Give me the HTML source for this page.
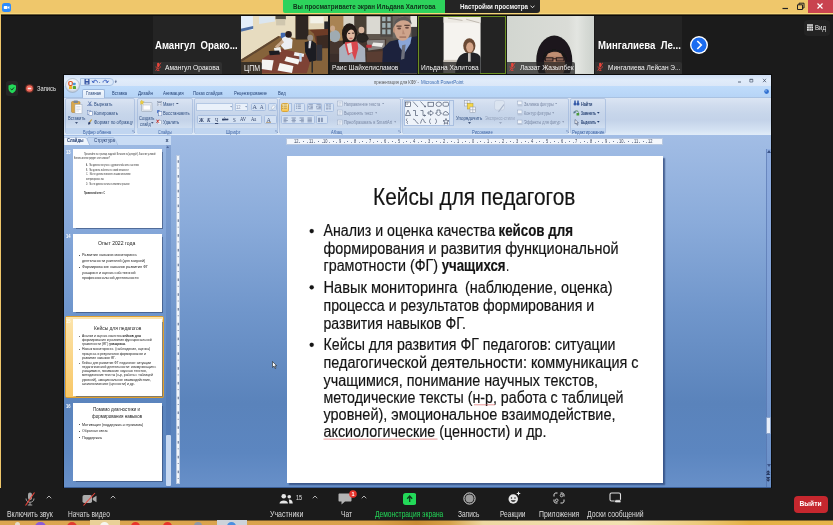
<!DOCTYPE html>
<html lang="ru">
<head>
<meta charset="utf-8">
<title>Zoom</title>
<style>
*{box-sizing:border-box;margin:0;padding:0}
html,body{width:833px;height:525px;overflow:hidden;background:#1b1b1b}
body{font-family:"Liberation Sans",sans-serif;color:#fff;position:relative}
.abs{position:absolute}
#root{will-change:transform;position:absolute;left:0;top:0;width:833px;height:525px;background:#1b1b1b;overflow:hidden}
.t{position:absolute;white-space:nowrap;line-height:1;transform-origin:0 0;font-family:"Liberation Sans",sans-serif}
</style>
</head>
<body>
<div id="root">
<!-- SECTION:TOP -->
<div class="abs" style="left:0px;top:0px;width:833px;height:14px;background:#efc76b;"></div>
<div class="abs" style="left:0px;top:13px;width:833px;height:1px;background:#f6d67a;"></div>
<div class="abs" style="left:0px;top:14px;width:833px;height:1px;background:#6b5a32;"></div>
<div class="abs" style="left:0px;top:15px;width:833px;height:1px;background:#0b0b0b;"></div>
<div class="abs" style="left:0px;top:14px;width:1px;height:506px;background:#efc76b;"></div>
<svg class="abs" style="left:2px;top:2.5px" width="9" height="9" viewBox="0 0 18 18"><rect x="0" y="0" width="18" height="18" rx="5" fill="#2d8cff"/><rect x="3.5" y="6" width="7.5" height="6" rx="1.5" fill="#fff"/><path d="M11.8 8.2 L14.8 6.2 V11.8 L11.8 9.8Z" fill="#fff"/></svg>
<div class="abs" style="left:283px;top:0px;width:162px;height:12.6px;background:#2dd35c;border-radius:0 0 0 2px"></div>
<div class="t" style="left:293px;top:2.79px;font-size:7.8px;color:#10301a;transform:scaleX(0.806);font-weight:bold">Вы просматриваете экран Ильдана Халитова</div>
<div class="abs" style="left:445px;top:0px;width:94.5px;height:13px;background:#242424;border-radius:0 0 3px 0"></div>
<div class="t" style="left:460px;top:2.98px;font-size:7.6px;color:#f4f4f4;transform:scaleX(0.821);font-weight:bold">Настройки просмотра</div>
<svg class="abs" style="left:530px;top:5.2px" width="5" height="3.6" viewBox="0 0 10 7"><path d="M1 1.2 L5 5.4 L9 1.2" stroke="#f2f2f2" stroke-width="1.8" fill="none"/></svg>
<div class="abs" style="left:808px;top:0px;width:25px;height:12.6px;background:#c9434f;"></div>
<svg class="abs" style="left:778px;top:0" width="55" height="14" viewBox="0 0 55 14"><path d="M4.5 8.5 H10" stroke="#222" stroke-width="1.2"/><path d="M19.5 4.8 H24.5 V9.5 H19.5Z M21 4.8 V3.2 H26 V8 H24.5" stroke="#222" stroke-width="1" fill="none"/><path d="M39.5 3.5 L44.5 8.5 M44.5 3.5 L39.5 8.5" stroke="#fff" stroke-width="1.2"/></svg>
<div class="abs" style="left:803.5px;top:20px;width:26px;height:16px;background:#232323;border-radius:4px"></div>
<svg class="abs" style="left:806.8px;top:24px" width="6.4" height="7" viewBox="0 0 14 14"><rect x="0" y="0" width="14" height="3.2" fill="#e8e8e8"/><rect x="0" y="4.6" width="14" height="9.4" fill="#e8e8e8"/><path d="M4.7 4.6V14M9.3 4.6V14M0 9.3H14" stroke="#222" stroke-width="1"/></svg>
<div class="t" style="left:815px;top:24.18px;font-size:7.6px;color:#eee;transform:scaleX(0.800);">Вид</div>
<div class="abs" style="left:5.5px;top:81px;width:12.5px;height:15px;background:#262626;border-radius:2.5px"></div>
<svg class="abs" style="left:7.5px;top:84px" width="8.5" height="9.5" viewBox="0 0 17 19"><path d="M8.5 0.5 L16 3 V9 C16 14 12.5 17 8.5 18.5 C4.5 17 1 14 1 9 V3Z" fill="#23d959"/><path d="M5 9.5 L7.7 12 L12 7" stroke="#14301c" stroke-width="2" fill="none"/></svg>
<svg class="abs" style="left:24px;top:83px" width="11" height="11" viewBox="0 0 22 22"><circle cx="11" cy="11" r="9" fill="#d0462e" opacity=".35"/><circle cx="11" cy="11" r="6.6" fill="#f0685a"/><rect x="7.5" y="9.5" width="7" height="3" rx="1" fill="#fbe9e6"/></svg>
<div class="t" style="left:37px;top:85.07px;font-size:7.4px;color:#e6e6e6;transform:scaleX(0.782);">Запись</div>
<!-- SECTION:GALLERY -->
<div class="abs" style="left:153px;top:16.3px;width:87.5px;height:57.3px;background:#242424;"></div>
<div class="t" style="left:155px;top:40.05px;font-size:11px;color:#fff;transform:scaleX(0.870);font-weight:bold">Амангул&nbsp; Орако...</div>
<div class="abs" style="left:153px;top:61.6px;width:69px;height:12px;background:#303030;border-radius:0 2px 0 0"></div>
<svg class="abs" style="left:155.2px;top:62.4px" width="6.4" height="9.6" viewBox="0 0 14 20"><rect x="4.6" y="1" width="5" height="10" rx="2.5" fill="#e8443a"/><path d="M2 9 C2 15.5 12 15.5 12 9 M7 14 V18 M4.2 18 H9.8" stroke="#e8443a" stroke-width="1.6" fill="none"/><path d="M13 1 L1.5 18.5" stroke="#e8443a" stroke-width="1.8"/></svg>
<div class="t" style="left:165.4px;top:64.29px;font-size:7.8px;color:#f2f2f2;transform:scaleX(0.860);">Амангул Оракова</div>
<div class="abs" style="left:240.7px;top:16.3px;width:87.5px;height:57.3px;background:#86643a;"></div>
<svg class="abs" style="left:240.7px;top:16.3px" width="87.5" height="57.3" viewBox="0 0 87.5 57.3"><defs><filter id="bl240" x="-5%" y="-5%" width="110%" height="110%"><feGaussianBlur stdDeviation="4.92"/></filter><clipPath id="cp240"><rect x="0" y="0" width="87.5" height="57.3"/></clipPath></defs><g clip-path="url(#cp240)"><g transform="translate(-2.7,-4.3) scale(0.12195)" filter="url(#bl240)">
<rect x="0" y="0" width="780" height="540" fill="#86643a"/>
<polygon points="20,30 470,30 470,215 330,200 20,395" fill="#e7dcc0"/>
<polygon points="20,395 330,200 340,212 20,415" fill="#5e4630"/>
<rect x="20" y="30" width="100" height="120" fill="#e4eefa"/><polygon points="20,140 122,118 122,140 20,165" fill="#4f6fa5"/>
<polygon points="170,40 300,40 300,80 170,100" fill="#dbe6f0"/>
<rect x="305" y="30" width="85" height="32" fill="#55524a"/><rect x="310" y="62" width="75" height="50" fill="#cfc6ae"/>
<rect x="470" y="30" width="105" height="198" fill="#2e2620"/>
<rect x="575" y="30" width="175" height="115" fill="#e3d8bc"/><rect x="590" y="40" width="110" height="55" fill="#f2f1e8"/>
<rect x="705" y="80" width="45" height="65" fill="#26262a"/>
<polygon points="585,150 750,140 750,270 640,270 620,180" fill="#6d3a28"/>
<polygon points="640,200 750,190 750,300 650,300" fill="#3a2a24"/>
<polygon points="190,392 330,298 605,362 560,510 190,510" fill="#7e4234"/>
<polygon points="20,420 190,392 190,510 20,510" fill="#7d5f3a"/>
<rect x="348" y="172" width="40" height="45" rx="8" fill="#3f68b0"/>
<polygon points="360,215 400,195 445,230 440,300 380,312 350,280" fill="#eceef2"/>
<polygon points="300,285 360,230 375,250 320,300" fill="#c9a98c"/>
<ellipse cx="412" cy="186" rx="27" ry="27" fill="#2a1f1a"/>
<rect x="640" y="272" width="48" height="130" rx="8" fill="#33333a"/>
<polygon points="545,250 600,235 640,262 640,400 585,412 548,330" fill="#1b1b20"/>
<ellipse cx="590" cy="215" rx="24" ry="25" fill="#9a9088"/>
<polygon points="578,240 600,240 592,300 575,300" fill="#d8d8dc"/>
<rect x="600" y="400" width="12" height="100" fill="#2a2a2e"/>
<polygon points="195,392 290,398 275,482 185,470" fill="#f4f4f2"/>
<polygon points="395,368 505,392 490,432 378,405" fill="#f6f6f4"/>
<polygon points="340,420 452,445 440,502 322,482" fill="#f6f6f4"/>
<polygon points="462,330 540,345 535,372 455,360" fill="#f1f1ef"/>
<polygon points="292,298 345,290 352,330 300,338" fill="#efefed"/>
<polygon points="250,322 335,318 342,350 258,358" fill="#1e1e22"/>
<rect x="500" y="340" width="20" height="70" rx="6" fill="#c3d8ee"/>
</g></g></svg>
<div class="abs" style="left:240.7px;top:61.6px;width:21.30000000000001px;height:12px;background:rgba(34,34,34,.74);border-radius:0 2px 0 0"></div>
<div class="t" style="left:243.9px;top:64.02px;font-size:8.4px;color:#f2f2f2;transform:scaleX(0.836);">ЦПМ</div>
<div class="abs" style="left:329.7px;top:16.3px;width:87.2px;height:57.3px;background:#5e564e;"></div>
<svg class="abs" style="left:329.7px;top:16.3px" width="87.2" height="57.3" viewBox="0 0 87.2 57.3"><defs><filter id="bl329" x="-5%" y="-5%" width="110%" height="110%"><feGaussianBlur stdDeviation="4.92"/></filter><clipPath id="cp329"><rect x="0" y="0" width="87.2" height="57.3"/></clipPath></defs><g clip-path="url(#cp329)"><g transform="translate(-3.7,-4.3) scale(0.12195)" filter="url(#bl329)">
<rect x="0" y="0" width="780" height="540" fill="#5e564e"/>
<rect x="20" y="30" width="125" height="210" fill="#a98352"/>
<rect x="140" y="30" width="92" height="95" fill="#d6d2c6"/>
<rect x="230" y="30" width="100" height="165" fill="#4a3f36"/>
<rect x="330" y="38" width="115" height="145" fill="#dad9d2"/>
<rect x="445" y="30" width="100" height="175" fill="#4e4944"/>
<g fill="#9fb0b4"><rect x="458" y="42" width="28" height="36"/><rect x="500" y="42" width="28" height="36"/><rect x="458" y="92" width="28" height="40"/><rect x="500" y="92" width="28" height="40"/><rect x="458" y="145" width="28" height="40"/><rect x="500" y="145" width="28" height="40"/></g>
<rect x="545" y="30" width="150" height="190" fill="#6b655e"/>
<rect x="690" y="30" width="65" height="95" fill="#e6e5dd"/>
<rect x="700" y="125" width="55" height="90" fill="#3c3a3a"/>
<polygon points="30,240 490,225 490,345 30,360" fill="#45362f"/>
<polygon points="330,235 480,230 480,300 345,318" fill="#8a8684"/>
<polygon points="385,252 468,258 455,290 372,280" fill="#ecebe8"/>
<rect x="328" y="272" width="44" height="24" rx="5" fill="#c2313a"/>
<rect x="30" y="345" width="460" height="170" fill="#3b2f2a"/>
<polygon points="330,330 480,322 480,420 330,420" fill="#5a3c30"/>
<ellipse cx="70" cy="200" rx="45" ry="50" fill="#9fabb2"/><ellipse cx="52" cy="138" rx="20" ry="24" fill="#caa88c"/>
<ellipse cx="295" cy="215" rx="48" ry="40" fill="#26221f"/><ellipse cx="288" cy="150" rx="24" ry="27" fill="#d8b49c"/>
<polygon points="255,200 300,185 350,215 330,245 260,245" fill="#2a2623"/>
<ellipse cx="190" cy="180" rx="62" ry="85" fill="#211a18"/>
<polygon points="105,300 150,258 260,252 318,300 322,415 105,415" fill="#a9b1be"/>
<polygon points="150,250 255,245 262,300 235,400 210,335 178,360 160,300" fill="#d9474d"/>
<polygon points="168,262 205,255 215,330 185,340" fill="#e8dcdc"/>
<ellipse cx="200" cy="190" rx="34" ry="48" fill="#e0b8a0"/>
<path d="M140 185 C140 90 250 90 255 185 C235 130 170 130 160 215Z" fill="#211a18"/>
<polygon points="465,300 520,245 600,225 755,200 755,515 455,515" fill="#1a233c"/>
<polygon points="588,235 700,205 690,260 640,340 600,290" fill="#8aa6d8"/>
<polygon points="622,275 650,268 640,385 612,395" fill="#6d707c"/>
<ellipse cx="625" cy="140" rx="70" ry="98" fill="#cfa48c"/>
<path d="M556 120 C550 20 700 15 700 105 C660 55 590 60 556 120Z" fill="#5a5858"/>
<path d="M575 118 h42 M640 112 h44" stroke="#5a4238" stroke-width="10"/>
<ellipse cx="598" cy="138" rx="16" ry="8" fill="#6a4a40"/><ellipse cx="662" cy="132" rx="16" ry="8" fill="#6a4a40"/>
<path d="M628 140 L622 185 L645 185" fill="#b88a74"/>
<path d="M600 208 h55" stroke="#8a5a4c" stroke-width="8"/>
<ellipse cx="556" cy="150" rx="9" ry="24" fill="#c0947c"/>
<path d="M178 178 h18 M210 176 h18" stroke="#3a2620" stroke-width="8"/>
<path d="M190 218 h24" stroke="#b04a4a" stroke-width="7"/>
<path d="M140 180 C130 240 135 270 150 262 L160 215Z" fill="#211a18"/>
</g></g></svg>
<div class="abs" style="left:329.7px;top:61.6px;width:70.10000000000002px;height:12px;background:rgba(34,34,34,.74);border-radius:0 2px 0 0"></div>
<div class="t" style="left:331.9px;top:64.29px;font-size:7.8px;color:#f2f2f2;transform:scaleX(0.839);">Раис Шайхелисламов</div>
<div class="abs" style="left:417.5px;top:16.3px;width:88.4px;height:57.3px;background:#232323;"></div>
<svg class="abs" style="left:417.5px;top:16.3px" width="88.4" height="57.3" viewBox="0 0 88.4 57.3"><defs><filter id="bl417" x="-5%" y="-5%" width="110%" height="110%"><feGaussianBlur stdDeviation="3.28"/></filter><clipPath id="cp417"><rect x="0" y="0" width="88.4" height="57.3"/></clipPath></defs><g clip-path="url(#cp417)"><g transform="translate(-5.5,-4.3) scale(0.12195)" filter="url(#bl417)">
<rect x="255" y="30" width="303" height="480" fill="#f5f3ef"/>
<rect x="255" y="30" width="303" height="60" fill="#ece9e3"/>
<path d="M290 52 L410 72 M440 62 L550 92" stroke="#b9b2a8" stroke-width="7"/>
<rect x="255" y="395" width="120" height="115" fill="#cdc6bc"/>
<path d="M350 510 C350 380 390 335 470 332 C520 332 558 350 558 380 V510Z" fill="#202428"/>
<ellipse cx="466" cy="280" rx="50" ry="62" fill="#6b4a34"/>
<ellipse cx="470" cy="292" rx="30" ry="42" fill="#d6a68a"/>
<rect x="455" y="340" width="22" height="70" fill="#c9c4c0"/>
</g></g></svg>
<div class="abs" style="left:417.5px;top:16.3px;width:88.4px;height:57.3px;background:transparent;border:1px solid #6a8f22"></div>
<div class="abs" style="left:418.5px;top:61.6px;width:61.5px;height:12px;background:rgba(34,34,34,.74);border-radius:0 2px 0 0"></div>
<div class="t" style="left:420.8px;top:64.29px;font-size:7.8px;color:#f2f2f2;transform:scaleX(0.841);">Ильдана Халитова</div>
<div class="abs" style="left:507px;top:16.3px;width:86.7px;height:57.3px;background:#d6d9d4;"></div>
<svg class="abs" style="left:507px;top:16.3px" width="86.7" height="57.3" viewBox="0 0 86.7 57.3"><defs><filter id="bl507" x="-5%" y="-5%" width="110%" height="110%"><feGaussianBlur stdDeviation="4.92"/></filter><clipPath id="cp507"><rect x="0" y="0" width="86.7" height="57.3"/></clipPath></defs><g clip-path="url(#cp507)"><g transform="translate(-7,-4.3) scale(0.12195)" filter="url(#bl507)">
<defs><linearGradient id="w4" x1="0" x2="1" y1="0" y2="0"><stop offset="0" stop-color="#d2d6d0"/><stop offset=".7" stop-color="#dadcd7"/><stop offset=".8" stop-color="#e3e5e1"/><stop offset=".9" stop-color="#d6dad5"/><stop offset="1" stop-color="#ccd1cc"/></linearGradient></defs>
<rect x="40" y="20" width="740" height="500" fill="url(#w4)"/>
<ellipse cx="445" cy="400" rx="148" ry="205" fill="#1a181a"/>
<ellipse cx="447" cy="440" rx="86" ry="118" fill="#b5846a"/>
<path d="M352 395 C352 285 545 285 545 395 C520 330 470 322 420 332 C390 338 365 360 352 395Z" fill="#1a181a"/>
<path d="M372 378 h62 v26 h-62z M462 378 h62 v26 h-62z M434 386 h28" fill="#8a6454" stroke="#2a1c1c" stroke-width="9"/>
<ellipse cx="447" cy="350" rx="60" ry="16" fill="#c49478" opacity=".7"/>
</g></g></svg>
<div class="abs" style="left:507px;top:61.6px;width:67.60000000000002px;height:12px;background:rgba(34,34,34,.74);border-radius:0 2px 0 0"></div>
<svg class="abs" style="left:509.4px;top:62.4px" width="6.4" height="9.6" viewBox="0 0 14 20"><rect x="4.6" y="1" width="5" height="10" rx="2.5" fill="#e8443a"/><path d="M2 9 C2 15.5 12 15.5 12 9 M7 14 V18 M4.2 18 H9.8" stroke="#e8443a" stroke-width="1.6" fill="none"/><path d="M13 1 L1.5 18.5" stroke="#e8443a" stroke-width="1.8"/></svg>
<div class="t" style="left:519.5px;top:64.29px;font-size:7.8px;color:#f2f2f2;transform:scaleX(0.842);">Лаззат Жазылбек</div>
<div class="abs" style="left:595px;top:16.3px;width:87px;height:57.3px;background:#242424;"></div>
<div class="t" style="left:597.5px;top:40.05px;font-size:11px;color:#fff;transform:scaleX(0.872);font-weight:bold">Мингалиева&nbsp; Ле...</div>
<div class="abs" style="left:595px;top:61.6px;width:87px;height:12px;background:#303030;border-radius:0 2px 0 0"></div>
<svg class="abs" style="left:597px;top:62.4px" width="6.4" height="9.6" viewBox="0 0 14 20"><rect x="4.6" y="1" width="5" height="10" rx="2.5" fill="#e8443a"/><path d="M2 9 C2 15.5 12 15.5 12 9 M7 14 V18 M4.2 18 H9.8" stroke="#e8443a" stroke-width="1.6" fill="none"/><path d="M13 1 L1.5 18.5" stroke="#e8443a" stroke-width="1.8"/></svg>
<div class="t" style="left:607.8px;top:64.29px;font-size:7.8px;color:#f2f2f2;transform:scaleX(0.837);">Мингалиева Лейсан Э...</div>
<svg class="abs" style="left:688.5px;top:34.8px" width="20" height="20" viewBox="0 0 20 20"><circle cx="10" cy="10" r="9" fill="#fff"/><circle cx="10" cy="10" r="7.6" fill="#1b6cf0"/><path d="M8.3 6 L12.3 10 L8.3 14" stroke="#fff" stroke-width="1.6" fill="none"/></svg>
<!-- SECTION:PPT -->
<div class="abs" style="left:62.6px;top:74.2px;width:709.6px;height:414.6px;background:#0c0c0c;"></div>
<div class="abs" style="left:63.7px;top:75.4px;width:707.5px;height:412.6px;background:#7f9fd0;"></div>
<div class="abs" style="left:63.7px;top:75.4px;width:707.5px;height:10.4px;background:linear-gradient(#cfdff5 0%,#e1ecfa 45%,#dbe7f8 100%);"></div>
<div class="abs" style="left:63.7px;top:85.7px;width:707.5px;height:11px;background:linear-gradient(#c0dcfb,#b6d4f6);"></div>
<div class="abs" style="left:63.7px;top:96.6px;width:707.5px;height:1px;background:#a9c2e2;"></div>
<div class="abs" style="left:63.7px;top:97.5px;width:707.5px;height:37px;background:linear-gradient(#dbe5f3 0%,#d0dcee 20%,#c6d5ea 45%,#c4d3e9 60%,#d3e1f2 85%,#e1ecf8 100%);"></div>
<svg class="abs" style="left:64.6px;top:77.6px" width="15" height="15" viewBox="0 0 30 30"><defs><radialGradient id="ob" cx=".5" cy=".35" r=".7"><stop offset="0" stop-color="#ffffff"/><stop offset=".6" stop-color="#e6ebf2"/><stop offset="1" stop-color="#aab7c9"/></radialGradient></defs><circle cx="15" cy="15" r="14" fill="url(#ob)" stroke="#8e9db3" stroke-width="1"/><rect x="7.6" y="7" width="7" height="8" rx="2.4" fill="none" stroke="#e0521e" stroke-width="2.4"/><rect x="15.6" y="9.4" width="5.6" height="5" rx="1" fill="#4a9ad8"/><rect x="8" y="16.2" width="6.4" height="6" rx="1.4" fill="#f0b428"/><rect x="15.6" y="15.8" width="6.4" height="6.4" rx="1.4" fill="#5aa832"/></svg>
<div class="abs" style="left:80px;top:77.6px;width:34px;height:8px;background:#dce9f9;border:0.6px solid #a9c2e4;border-radius:0 4px 4px 0"></div>
<svg class="abs" style="left:82px;top:78px" width="38" height="8" viewBox="0 0 76 16"><rect x="5" y="2" width="10" height="11" rx="1" fill="#2f4fa0"/><rect x="7.5" y="2.5" width="5" height="3.6" fill="#dfe8f6"/><rect x="7.5" y="8.5" width="5" height="4.5" fill="#9fb4dc"/><path d="M22 9 C22 3 31 3 31 9 M22 9 L20 5.5 M22 9 L25.5 7.5" stroke="#3a5fc0" stroke-width="2" fill="none"/><path d="M34 8 l2.5 0 l-1.25 2z" fill="#4a5f86"/><path d="M51 9 C51 3 42 3 42 9 M51 9 L53 5.5 M51 9 L47.5 7.5" stroke="#3a5fc0" stroke-width="2" fill="none"/><path d="M66 7 l3 0 l-1.5 2.4z M66 4.8 h3" stroke="#3b4f78" stroke-width=".8" fill="#3b4f78"/></svg>
<div class="t" style="left:373.5px;top:78.55px;font-size:6.1px;color:#555;transform:scaleX(0.694);">презентация для КФУ -</div>
<div class="t" style="left:421px;top:78.55px;font-size:6.1px;color:#3a6ab0;transform:scaleX(0.737);">Microsoft PowerPoint</div>
<svg class="abs" style="left:733px;top:76px" width="36" height="10" viewBox="0 0 36 10"><path d="M5 6 H8" stroke="#39465e" stroke-width=".8"/><path d="M16.8 3.2 H19.8 V6 H16.8Z M16.8 3.6 H19.8" stroke="#39465e" stroke-width=".6" fill="none"/><path d="M30 2.8 L33 6.2 M33 2.8 L30 6.2" stroke="#39465e" stroke-width=".7"/></svg>
<svg class="abs" style="left:764.1px;top:89.2px" width="5.2" height="5.2" viewBox="0 0 12 12"><circle cx="6" cy="6" r="5.4" fill="#2f6fd0"/><circle cx="4.6" cy="4.2" r="2" fill="#9cc2f4" opacity=".8"/></svg>
<div class="abs" style="left:82.4px;top:88.6px;width:22.6px;height:9.2px;background:linear-gradient(#f3f8fe,#dfeaf8);border:0.6px solid #9ab6dc;border-bottom:0;border-radius:2px 2px 0 0"></div>
<div class="t" style="left:86px;top:89.90px;font-size:6px;color:#1f3d72;transform:scaleX(0.657);">Главная</div>
<div class="t" style="left:111.8px;top:89.90px;font-size:6px;color:#1f3d72;transform:scaleX(0.677);">Вставка</div>
<div class="t" style="left:137.8px;top:89.90px;font-size:6px;color:#1f3d72;transform:scaleX(0.744);">Дизайн</div>
<div class="t" style="left:162.9px;top:89.90px;font-size:6px;color:#1f3d72;transform:scaleX(0.731);">Анимация</div>
<div class="t" style="left:193.3px;top:89.90px;font-size:6px;color:#1f3d72;transform:scaleX(0.712);">Показ слайдов</div>
<div class="t" style="left:234px;top:89.90px;font-size:6px;color:#1f3d72;transform:scaleX(0.712);">Рецензирование</div>
<div class="t" style="left:277.7px;top:89.90px;font-size:6px;color:#1f3d72;transform:scaleX(0.700);">Вид</div>
<div class="abs" style="left:65px;top:98.2px;width:70px;height:36px;background:transparent;border:0.6px solid rgba(150,175,215,.55);border-radius:2px"></div>
<div class="abs" style="left:65.6px;top:128.3px;width:68.8px;height:6.1px;background:#c0d5f0;border-radius:0 0 2px 2px"></div>
<div class="abs" style="left:136.5px;top:98.2px;width:56.30000000000001px;height:36px;background:transparent;border:0.6px solid rgba(150,175,215,.55);border-radius:2px"></div>
<div class="abs" style="left:137.1px;top:128.3px;width:55.10000000000001px;height:6.1px;background:#c0d5f0;border-radius:0 0 2px 2px"></div>
<div class="abs" style="left:194px;top:98.2px;width:83.69999999999999px;height:36px;background:transparent;border:0.6px solid rgba(150,175,215,.55);border-radius:2px"></div>
<div class="abs" style="left:194.6px;top:128.3px;width:82.49999999999999px;height:6.1px;background:#c0d5f0;border-radius:0 0 2px 2px"></div>
<div class="abs" style="left:279px;top:98.2px;width:121.60000000000002px;height:36px;background:transparent;border:0.6px solid rgba(150,175,215,.55);border-radius:2px"></div>
<div class="abs" style="left:279.6px;top:128.3px;width:120.40000000000002px;height:6.1px;background:#c0d5f0;border-radius:0 0 2px 2px"></div>
<div class="abs" style="left:402px;top:98.2px;width:166.89999999999998px;height:36px;background:transparent;border:0.6px solid rgba(150,175,215,.55);border-radius:2px"></div>
<div class="abs" style="left:402.6px;top:128.3px;width:165.7px;height:6.1px;background:#c0d5f0;border-radius:0 0 2px 2px"></div>
<div class="abs" style="left:570px;top:98.2px;width:36px;height:36px;background:transparent;border:0.6px solid rgba(150,175,215,.55);border-radius:2px"></div>
<div class="abs" style="left:570.6px;top:128.3px;width:34.8px;height:6.1px;background:#c0d5f0;border-radius:0 0 2px 2px"></div>
<div class="t" style="left:82.7px;top:128.75px;font-size:6.1px;color:#3d63a3;transform:scaleX(0.680);">Буфер обмена</div>
<div class="t" style="left:157.8px;top:128.75px;font-size:6.1px;color:#3d63a3;transform:scaleX(0.617);">Слайды</div>
<div class="t" style="left:225.6px;top:128.75px;font-size:6.1px;color:#3d63a3;transform:scaleX(0.718);">Шрифт</div>
<div class="t" style="left:331.3px;top:128.75px;font-size:6.1px;color:#3d63a3;transform:scaleX(0.660);">Абзац</div>
<div class="t" style="left:472px;top:128.75px;font-size:6.1px;color:#3d63a3;transform:scaleX(0.674);">Рисование</div>
<div class="t" style="left:572px;top:128.75px;font-size:6.1px;color:#3d63a3;transform:scaleX(0.699);">Редактирование</div>
<svg class="abs" style="left:132.3px;top:129.6px" width="3" height="3" viewBox="0 0 6 6"><path d="M0.5 0.5H4M0.5 0.5V4M2.5 2.5L5.5 5.5M5.5 3V5.5H3" stroke="#6c86b4" stroke-width=".9" fill="none"/></svg>
<svg class="abs" style="left:275px;top:129.6px" width="3" height="3" viewBox="0 0 6 6"><path d="M0.5 0.5H4M0.5 0.5V4M2.5 2.5L5.5 5.5M5.5 3V5.5H3" stroke="#6c86b4" stroke-width=".9" fill="none"/></svg>
<svg class="abs" style="left:398px;top:129.6px" width="3" height="3" viewBox="0 0 6 6"><path d="M0.5 0.5H4M0.5 0.5V4M2.5 2.5L5.5 5.5M5.5 3V5.5H3" stroke="#6c86b4" stroke-width=".9" fill="none"/></svg>
<svg class="abs" style="left:566.3px;top:129.6px" width="3" height="3" viewBox="0 0 6 6"><path d="M0.5 0.5H4M0.5 0.5V4M2.5 2.5L5.5 5.5M5.5 3V5.5H3" stroke="#6c86b4" stroke-width=".9" fill="none"/></svg>
<svg class="abs" style="left:71px;top:100px" width="12" height="14" viewBox="0 0 24 28"><rect x="1" y="3" width="17" height="22" rx="2" fill="#d9a74a" stroke="#a87a2c"/><rect x="5" y="0.8" width="9" height="5" rx="1.5" fill="#7d8896"/><rect x="8" y="9" width="14" height="18" fill="#fdfdfe" stroke="#9aa7ba"/><path d="M10.5 13H19M10.5 16H19M10.5 19H19M10.5 22H16" stroke="#b9c4d6" stroke-width="1"/></svg>
<div class="t" style="left:67.6px;top:114.95px;font-size:6.1px;color:#2b4a7d;transform:scaleX(0.669);">Вставить</div>
<svg class="abs" style="left:75px;top:121.8px" width="3" height="2" viewBox="0 0 6 4"><path d="M0 0H6L3 4Z" fill="#44577c"/></svg>
<svg class="abs" style="left:87px;top:100.6px" width="5.6" height="5.6" viewBox="0 0 12 12"><path d="M3 1 L8 9 M9 1 L4 9" stroke="#3c5a9a" stroke-width="1.4"/><circle cx="3.2" cy="10" r="1.8" fill="none" stroke="#3c5a9a" stroke-width="1.2"/><circle cx="8.8" cy="10" r="1.8" fill="none" stroke="#3c5a9a" stroke-width="1.2"/></svg>
<div class="t" style="left:94px;top:100.85px;font-size:6.1px;color:#2b4a7d;transform:scaleX(0.678);">Вырезать</div>
<svg class="abs" style="left:87px;top:109.8px" width="5.6" height="6" viewBox="0 0 12 13"><rect x="0.7" y="0.7" width="7" height="8.5" fill="#f4f7fc" stroke="#5a78b0"/><rect x="4.3" y="3.8" width="7" height="8.5" fill="#fff" stroke="#5a78b0"/></svg>
<div class="t" style="left:94px;top:110.05px;font-size:6.1px;color:#2b4a7d;transform:scaleX(0.731);">Копировать</div>
<svg class="abs" style="left:87px;top:118.8px" width="5.6" height="6.2" viewBox="0 0 12 13"><path d="M10 1 L5.5 7" stroke="#c99a30" stroke-width="2.4"/><path d="M2 8 L6.5 6 L7.5 9.5 L3.5 12.5 Z" fill="#2e3f6a"/></svg>
<div class="t" style="left:94px;top:119.25px;font-size:6.1px;color:#2b4a7d;transform:scaleX(0.713);">Формат по образцу</div>
<svg class="abs" style="left:140px;top:100px" width="13" height="13" viewBox="0 0 26 26"><rect x="3" y="5" width="21" height="18" rx="1.5" fill="#e3e8ef" stroke="#8d99ab"/><rect x="6" y="10" width="15" height="10" fill="#fdfdfe" stroke="#b4bdcb"/><path d="M3.5 0 L5 3 L8.5 3.5 L5.5 5.5 L6.5 9 L3.5 7 L0.8 9 L1.8 5.5 L-1 3.5 L2.4 3Z" fill="#f4d23a" stroke="#c9a216" stroke-width=".6"/></svg>
<div class="t" style="left:138.7px;top:114.95px;font-size:6.1px;color:#2b4a7d;transform:scaleX(0.660);">Создать</div>
<div class="t" style="left:139.6px;top:120.55px;font-size:6.1px;color:#2b4a7d;transform:scaleX(0.636);">слайд</div>
<svg class="abs" style="left:151.4px;top:122.3px" width="2.6" height="1.8" viewBox="0 0 6 4"><path d="M0 0H6L3 4Z" fill="#44577c"/></svg>
<svg class="abs" style="left:156.6px;top:100.6px" width="5.2" height="5.6" viewBox="0 0 11 12"><rect x=".6" y=".6" width="9.8" height="10.8" fill="#eef2f8" stroke="#7c8ba4"/><rect x="2" y="2" width="7" height="2.2" fill="#8a98b2"/><rect x="2" y="5.5" width="3" height="4.4" fill="#b4bfd3"/><rect x="6" y="5.5" width="3" height="4.4" fill="#b4bfd3"/></svg>
<div class="t" style="left:163.4px;top:100.85px;font-size:6.1px;color:#2b4a7d;transform:scaleX(0.649);">Макет</div>
<svg class="abs" style="left:176px;top:102.60000000000001px" width="2.6" height="1.8" viewBox="0 0 6 4"><path d="M0 0H6L3 4Z" fill="#44577c"/></svg>
<svg class="abs" style="left:156.6px;top:109.6px" width="5.2" height="6.3" viewBox="0 0 12 14"><rect x="3.4" y="3.5" width="8" height="10" fill="#f0f4fb" stroke="#3c5da0"/><path d="M1 1 V7 M1 1 H6" stroke="#2b59c0" stroke-width="1.8" fill="none"/></svg>
<div class="t" style="left:163.4px;top:110.05px;font-size:6.1px;color:#2b4a7d;transform:scaleX(0.681);">Восстановить</div>
<svg class="abs" style="left:156.4px;top:118.9px" width="5.6" height="5.6" viewBox="0 0 13 13"><rect x="4" y="3" width="8.4" height="9" fill="#eef2f9" stroke="#7c8ba4"/><path d="M1 1.5 L7 9 M7 1.5 L1 9" stroke="#d02a1e" stroke-width="2"/></svg>
<div class="t" style="left:163.4px;top:119.25px;font-size:6.1px;color:#2b4a7d;transform:scaleX(0.700);">Удалить</div>
<div class="abs" style="left:196.3px;top:102.8px;width:37px;height:8.7px;background:#eaf1fa;border:0.6px solid #b4c8e4"></div>
<div class="abs" style="left:234.5px;top:102.8px;width:13.9px;height:8.7px;background:#eaf1fa;border:0.6px solid #b4c8e4"></div>
<div class="t" style="left:235.8px;top:104.96px;font-size:5.2px;color:#8796b2;transform:scaleX(0.800);">12</div>
<svg class="abs" style="left:229.8px;top:106.4px" width="2.4" height="1.6" viewBox="0 0 6 4"><path d="M0 0H6L3 4Z" fill="#8b9bb8"/></svg>
<svg class="abs" style="left:245px;top:106.4px" width="2.4" height="1.6" viewBox="0 0 6 4"><path d="M0 0H6L3 4Z" fill="#8b9bb8"/></svg>
<div class="abs" style="left:250.5px;top:102.8px;width:15.1px;height:8.7px;background:#d3e1f3;border:0.6px solid #a9bfe0;border-radius:1.5px"></div>
<div class="t" style="left:252.3px;top:104.33px;font-size:6.6px;color:#46587e;transform:scaleX(1.000);font-family:'Liberation Serif',serif">A</div>
<div class="t" style="left:259.8px;top:105.37px;font-size:5.4px;color:#46587e;transform:scaleX(1.000);font-family:'Liberation Serif',serif">A</div>
<div class="abs" style="left:268.4px;top:102.8px;width:8.4px;height:8.7px;background:#d3e1f3;border:0.6px solid #a9bfe0;border-radius:1.5px"></div>
<svg class="abs" style="left:269.6px;top:104.4px" width="6" height="6" viewBox="0 0 12 12"><path d="M2 8 L7 2 L10.5 5 L5.5 11Z" fill="#f2f5fa" stroke="#9aa8c0" stroke-width=".8"/><path d="M1 10.5 H6" stroke="#b5c0d4"/></svg>
<div class="abs" style="left:196.7px;top:115.4px;width:65.5px;height:8.4px;background:#d5e2f3;border:0.6px solid #a9bfe0;border-radius:1.5px"></div>
<div class="t" style="left:198.6px;top:117.00px;font-size:6px;color:#33446a;transform:scaleX(0.820);font-family:'Liberation Serif',serif;font-weight:bold">Ж</div>
<div class="t" style="left:206.6px;top:117.00px;font-size:6px;color:#33446a;transform:scaleX(0.820);font-family:'Liberation Serif',serif;font-style:italic;font-weight:bold">К</div>
<div class="t" style="left:214.8px;top:117.00px;font-size:6px;color:#33446a;transform:scaleX(0.820);font-family:'Liberation Serif',serif;text-decoration:underline">Ч</div>
<div class="t" style="left:222.2px;top:117.18px;font-size:5.6px;color:#33446a;transform:scaleX(0.820);font-family:'Liberation Serif',serif;text-decoration:line-through">abc</div>
<div class="t" style="left:233.4px;top:117.00px;font-size:6px;color:#33446a;transform:scaleX(0.820);font-family:'Liberation Serif',serif;">S</div>
<div class="t" style="left:239.6px;top:117.18px;font-size:5.6px;color:#33446a;transform:scaleX(0.820);font-family:'Liberation Serif',serif;">AV</div>
<div class="t" style="left:251.2px;top:117.18px;font-size:5.6px;color:#33446a;transform:scaleX(0.820);font-family:'Liberation Serif',serif;">Aa</div>
<div class="abs" style="left:264.2px;top:115.4px;width:12.6px;height:8.4px;background:#d5e2f3;border:0.6px solid #a9bfe0;border-radius:1.5px"></div>
<div class="t" style="left:266.4px;top:116.50px;font-size:6px;color:#46587e;transform:scaleX(1.000);font-family:'Liberation Serif',serif">A</div>
<div class="abs" style="left:266px;top:122px;width:4.6px;height:1px;background:#b8a68a;"></div>
<div class="abs" style="left:280.7px;top:102.5px;width:8.2px;height:9px;background:linear-gradient(#fde9a8,#f9c44c);border:0.6px solid #d9a63a;border-radius:1.5px"></div>
<svg class="abs" style="left:282.2px;top:104.4px" width="5.4" height="5.4" viewBox="0 0 11 11"><path d="M3.5 2H10M3.5 5.5H10M3.5 9H10" stroke="#8f7a4a" stroke-width="1.1"/><circle cx="1.3" cy="2" r="1" fill="#8f7a4a"/><circle cx="1.3" cy="5.5" r="1" fill="#8f7a4a"/><circle cx="1.3" cy="9" r="1" fill="#8f7a4a"/></svg>
<div class="abs" style="left:289px;top:102.5px;width:3.4px;height:9px;background:#d5e2f3;border:0.6px solid #a9bfe0;border-left:0"></div>
<div class="abs" style="left:294.2px;top:102.5px;width:11px;height:9px;background:#d5e2f3;border:0.6px solid #a9bfe0;border-radius:1.5px"></div>
<svg class="abs" style="left:295.6px;top:104.4px" width="5.4" height="5.4" viewBox="0 0 11 11"><path d="M3.5 2H10M3.5 5.5H10M3.5 9H10" stroke="#5a6c93" stroke-width="1.1"/><path d="M1 .8V3.2M1 4.3V6.7M1 7.8V10.2" stroke="#5a6c93" stroke-width="1"/></svg>
<div class="abs" style="left:306.8px;top:102.5px;width:15.6px;height:9px;background:#d5e2f3;border:0.6px solid #a9bfe0;border-radius:1.5px"></div>
<svg class="abs" style="left:308.4px;top:104.4px" width="5.4" height="5.4" viewBox="0 0 11 11"><path d="M1 1.5H10M5 4.5H10M5 7H10M1 9.8H10" stroke="#506188" stroke-width="1.1"/><path d="M1 4 L3.4 5.8 L1 7.6Z" fill="#506188"/></svg>
<svg class="abs" style="left:315.8px;top:104.4px" width="5.4" height="5.4" viewBox="0 0 11 11"><path d="M1 1.5H10M5 4.5H10M5 7H10M1 9.8H10" stroke="#506188" stroke-width="1.1"/><path d="M1 4 L3.4 5.8 L1 7.6Z" fill="#506188"/></svg>
<div class="abs" style="left:324.4px;top:102.5px;width:10px;height:9px;background:#d5e2f3;border:0.6px solid #a9bfe0;border-radius:1.5px"></div>
<svg class="abs" style="left:325.6px;top:104.2px" width="5.4" height="5.8" viewBox="0 0 11 12"><path d="M5 2H10.5M5 6H10.5M5 10H10.5" stroke="#506188" stroke-width="1.1"/><path d="M2 1V11M.5 3 L2 .8 L3.5 3M.5 9L2 11.2L3.5 9" stroke="#506188" stroke-width=".9" fill="none"/></svg>
<div class="abs" style="left:281px;top:115.4px;width:33.7px;height:8.4px;background:#d5e2f3;border:0.6px solid #a9bfe0;border-radius:1.5px"></div>
<svg class="abs" style="left:282.8px;top:116.8px" width="5.4" height="5.8" viewBox="0 0 11 12"><path d="M1 2H10M1 4.7H7M1 7.4H10M1 10H7" stroke="#56688f" stroke-width="1.2"/></svg>
<svg class="abs" style="left:291px;top:116.8px" width="5.4" height="5.8" viewBox="0 0 11 12"><path d="M1 2H10M2.5 4.7H8.5M1 7.4H10M2.5 10H8.5" stroke="#56688f" stroke-width="1.2"/></svg>
<svg class="abs" style="left:299.2px;top:116.8px" width="5.4" height="5.8" viewBox="0 0 11 12"><path d="M1 2H10M4 4.7H10M1 7.4H10M4 10H10" stroke="#56688f" stroke-width="1.2"/></svg>
<svg class="abs" style="left:307.4px;top:116.8px" width="5.4" height="5.8" viewBox="0 0 11 12"><path d="M1 2H10M1 4.7H10M1 7.4H10M1 10H10" stroke="#56688f" stroke-width="1.2"/></svg>
<div class="abs" style="left:316.3px;top:115.4px;width:11.5px;height:8.4px;background:#d5e2f3;border:0.6px solid #a9bfe0;border-radius:1.5px"></div>
<svg class="abs" style="left:318px;top:116.8px" width="5.4" height="5.8" viewBox="0 0 11 12"><path d="M1 1.5V10.5M3 1.5V10.5M7 1.5V10.5M9 1.5V10.5" stroke="#56688f" stroke-width="1.3"/></svg>
<svg class="abs" style="left:336.6px;top:100.19999999999999px" width="6" height="6.6" viewBox="0 0 12 13"><rect x="1" y="2" width="10" height="10" fill="#eef3fa" stroke="#98a8c2"/><path d="M3 5H9M3 7.5H9M3 10H7" stroke="#a9b6cc" stroke-width="1"/></svg>
<div class="t" style="left:344.3px;top:100.85px;font-size:6.1px;color:#7a88a4;transform:scaleX(0.624);">Направление текста</div>
<svg class="abs" style="left:381.59999999999997px;top:102.6px" width="2.6" height="1.8" viewBox="0 0 6 4"><path d="M0 0H6L3 4Z" fill="#94a2ba"/></svg>
<svg class="abs" style="left:336.6px;top:109.39999999999999px" width="6" height="6.6" viewBox="0 0 12 13"><rect x="1" y="2" width="10" height="10" fill="#eef3fa" stroke="#98a8c2"/><path d="M3 5H9M3 7.5H9M3 10H7" stroke="#a9b6cc" stroke-width="1"/></svg>
<div class="t" style="left:344.3px;top:110.05px;font-size:6.1px;color:#7a88a4;transform:scaleX(0.617);">Выровнять текст</div>
<svg class="abs" style="left:374.8px;top:111.8px" width="2.6" height="1.8" viewBox="0 0 6 4"><path d="M0 0H6L3 4Z" fill="#94a2ba"/></svg>
<svg class="abs" style="left:336.6px;top:118.6px" width="6" height="6.6" viewBox="0 0 12 13"><rect x="1" y="2" width="10" height="10" fill="#eef3fa" stroke="#98a8c2"/><path d="M3 5H9M3 7.5H9M3 10H7" stroke="#a9b6cc" stroke-width="1"/></svg>
<div class="t" style="left:344.3px;top:119.25px;font-size:6.1px;color:#7a88a4;transform:scaleX(0.651);">Преобразовать в SmartArt</div>
<svg class="abs" style="left:393.7px;top:121.0px" width="2.6" height="1.8" viewBox="0 0 6 4"><path d="M0 0H6L3 4Z" fill="#94a2ba"/></svg>
<div class="abs" style="left:404px;top:99.7px;width:50.4px;height:26.1px;background:#eef3fa;border:0.6px solid #a9bfe0"></div>
<div class="abs" style="left:449.3px;top:99.7px;width:5.1px;height:26.1px;background:#d3e0f2;border:0.6px solid #a9bfe0"></div>
<svg class="abs" style="left:404px;top:99.7px" width="46" height="26" viewBox="0 0 92 52"><g stroke="#3f4a63" stroke-width="1.3" fill="none"><rect x="3" y="4" width="10" height="9" fill="#fff"/><path d="M5 6H9M5 8.5H8" stroke-width="1"/><path d="M18 3L28 14"/><path d="M33 3L43 14M43 14l-3-1M43 14l-.6-3"/><rect x="48" y="4.5" width="11" height="8"/><ellipse cx="69.5" cy="8.5" rx="5.5" ry="4.5"/><rect x="78" y="4.5" width="11" height="8" rx="2.5"/><path d="M8 20L3 31H13Z"/><path d="M18 21H23V31H28"/><path d="M33 21H38V31H43M43 31l-2.6-1.6M43 31l-2.6 1.6"/><path d="M48 24H53V21L59 26L53 31V28H48Z"/><path d="M66 20H72V26H75L69 32L63 26H66Z"/><path d="M80 30C77 30 77 26 80 26C80 22 86 22 86 25C90 25 90 30 87 30Z"/><path d="M6 37C4 39 4 41 7 43C5 45 6 47 8 47"/><path d="M18 38C24 38 24 47 29 47"/><path d="M33 47C36 36 38 36 40 42C41 46 43 46 44 44"/><path d="M54 37C50 40 50 45 54 48"/><path d="M62 37C66 40 66 45 62 48"/><path d="M84 37L85.6 41.4H90L86.4 44L87.8 48.4L84 45.6L80.2 48.4L81.6 44L78 41.4H82.4Z"/></g></svg>
<svg class="abs" style="left:463.6px;top:99.7px" width="12" height="13.5" viewBox="0 0 24 27"><rect x="1" y="1" width="11" height="11" fill="#f4f6fa" stroke="#8a94a6"/><path d="M1 6.5H12M6.5 1V12" stroke="#8a94a6"/><rect x="7" y="7" width="11" height="11" fill="#f6d648" stroke="#b39a22"/><rect x="12" y="14" width="11" height="11" fill="#f4f6fa" stroke="#8a94a6"/><path d="M12 19.5H23M17.5 14V25" stroke="#8a94a6"/></svg>
<div class="t" style="left:456.4px;top:115.45px;font-size:6.1px;color:#2b4a7d;transform:scaleX(0.722);">Упорядочить</div>
<svg class="abs" style="left:468.4px;top:122.4px" width="3" height="2" viewBox="0 0 6 4"><path d="M0 0H6L3 4Z" fill="#44577c"/></svg>
<svg class="abs" style="left:494.4px;top:100px" width="12" height="13" viewBox="0 0 24 26"><rect x="1" y="1" width="20" height="19" rx="4" fill="#dbe4f0" stroke="#b8c5d9"/><path d="M20 9 L11 21 L9 24" stroke="#a5b2c8" stroke-width="2.2" fill="none"/></svg>
<div class="t" style="left:484.8px;top:115.45px;font-size:6.1px;color:#94a2ba;transform:scaleX(0.668);">Экспресс-стили</div>
<svg class="abs" style="left:498.8px;top:122.4px" width="3" height="2" viewBox="0 0 6 4"><path d="M0 0H6L3 4Z" fill="#9aa8c0"/></svg>
<svg class="abs" style="left:517px;top:100.19999999999999px" width="6" height="6.6" viewBox="0 0 12 13"><rect x="1" y="2" width="9" height="7" fill="#f0f4fa" stroke="#98a8c2"/><path d="M1 11.5H11" stroke="#a9b6cc" stroke-width="1.6"/></svg>
<div class="t" style="left:523.8px;top:100.85px;font-size:6.1px;color:#7a88a4;transform:scaleX(0.640);">Заливка фигуры</div>
<svg class="abs" style="left:554.8000000000001px;top:102.6px" width="2.6" height="1.8" viewBox="0 0 6 4"><path d="M0 0H6L3 4Z" fill="#94a2ba"/></svg>
<svg class="abs" style="left:517px;top:109.39999999999999px" width="6" height="6.6" viewBox="0 0 12 13"><rect x="1" y="2" width="9" height="7" fill="#f0f4fa" stroke="#98a8c2"/><path d="M1 11.5H11" stroke="#a9b6cc" stroke-width="1.6"/></svg>
<div class="t" style="left:523.8px;top:110.05px;font-size:6.1px;color:#7a88a4;transform:scaleX(0.628);">Контур фигуры</div>
<svg class="abs" style="left:551.8000000000001px;top:111.8px" width="2.6" height="1.8" viewBox="0 0 6 4"><path d="M0 0H6L3 4Z" fill="#94a2ba"/></svg>
<svg class="abs" style="left:517px;top:118.6px" width="6" height="6.6" viewBox="0 0 12 13"><rect x="1" y="2" width="9" height="7" fill="#f0f4fa" stroke="#98a8c2"/><path d="M1 11.5H11" stroke="#a9b6cc" stroke-width="1.6"/></svg>
<div class="t" style="left:523.8px;top:119.25px;font-size:6.1px;color:#7a88a4;transform:scaleX(0.623);">Эффекты для фигур</div>
<svg class="abs" style="left:561.5px;top:121.0px" width="2.6" height="1.8" viewBox="0 0 6 4"><path d="M0 0H6L3 4Z" fill="#94a2ba"/></svg>
<svg class="abs" style="left:573px;top:100.4px" width="7" height="6.6" viewBox="0 0 14 13"><circle cx="4" cy="8" r="3" fill="#3559a8"/><circle cx="10" cy="8" r="3" fill="#3559a8"/><rect x="2.5" y="1" width="3" height="6" fill="#3559a8"/><rect x="8.5" y="1" width="3" height="6" fill="#3559a8"/></svg>
<div class="t" style="left:581px;top:100.85px;font-size:6.1px;color:#243f70;transform:scaleX(0.623);font-weight:bold">Найти</div>
<svg class="abs" style="left:573px;top:109.4px" width="7" height="7" viewBox="0 0 14 14"><path d="M2 9 C2 3 10 2 11 7" stroke="#3a6f3a" stroke-width="1.6" fill="none"/><text x="1" y="8" font-size="8" font-family="Liberation Sans" fill="#2a4a90">a</text><rect x="7" y="8" width="5.4" height="5" fill="#4a9a3a"/></svg>
<div class="t" style="left:581px;top:110.05px;font-size:6.1px;color:#243f70;transform:scaleX(0.512);font-weight:bold">Заменить</div>
<svg class="abs" style="left:597.2px;top:111.8px" width="2.6" height="1.8" viewBox="0 0 6 4"><path d="M0 0H6L3 4Z" fill="#243f70"/></svg>
<svg class="abs" style="left:574px;top:118.8px" width="6" height="7" viewBox="0 0 12 14"><path d="M2 1 L2 10 L4.5 8 L6.5 12.5 L8 11.8 L6 7.5 L9 7.5Z" fill="#fff" stroke="#2e3d5c" stroke-width="1"/></svg>
<div class="t" style="left:581px;top:119.25px;font-size:6.1px;color:#243f70;transform:scaleX(0.480);font-weight:bold">Выделить</div>
<svg class="abs" style="left:597.2px;top:121.0px" width="2.6" height="1.8" viewBox="0 0 6 4"><path d="M0 0H6L3 4Z" fill="#243f70"/></svg>
<div class="abs" style="left:63.7px;top:134.5px;width:707.5px;height:353.5px;background:linear-gradient(#a2bde5 0%,#8aabda 25%,#7096cb 50%,#5a83bb 76%,#5c86c0 90%,#6890c9 100%);"></div>
<div class="abs" style="left:63.7px;top:136.2px;width:107.3px;height:351.8px;background:linear-gradient(#9dbae3 0%,#86a8da 25%,#6e95cc 50%,#5b84bd 76%,#5d87c1 90%,#6890c9 100%);"></div>
<div class="abs" style="left:63.7px;top:136.2px;width:107.3px;height:8.8px;background:#c9dcf4;"></div>
<svg class="abs" style="left:63.7px;top:136.6px" width="60" height="8.6" viewBox="0 0 120 17.2"><path d="M0 17.2V3C0 1.5 1 0.8 2.5 0.8H40C44 0.8 46 4 48 8L52 17.2Z" fill="#eef4fc" stroke="#8fa9d2" stroke-width="1"/><path d="M52 17.2 L47 6 C46 2 48 0.8 51 0.8H96C100 0.8 102 4 104 8L108 17.2" fill="#c2d6f1" stroke="#8fa9d2" stroke-width="1"/></svg>
<div class="t" style="left:67px;top:138.39px;font-size:5.8px;color:#1f3a6e;transform:scaleX(0.708);font-weight:bold">Слайды</div>
<div class="t" style="left:93.6px;top:138.39px;font-size:5.8px;color:#1f3a6e;transform:scaleX(0.763);">Структура</div>
<div class="t" style="left:165.4px;top:138.08px;font-size:5.6px;color:#30466e;transform:scaleX(1.000);font-weight:bold">x</div>
<div class="abs" style="left:165.8px;top:145px;width:4.8px;height:343px;background:rgba(60,95,160,.22);"></div>
<div class="abs" style="left:166.4px;top:435.4px;width:4.2px;height:51px;background:#c8d9f1;border-radius:1px"></div>
<svg class="abs" style="left:166.2px;top:146px" width="3.4" height="2.4" viewBox="0 0 7 5"><path d="M0 5H7L3.5 0Z" fill="#4a6496"/></svg>
<div class="abs" style="left:73px;top:149.3px;width:88.7px;height:78.4px;background:#fff;box-shadow:0.5px 0.7px 0.8px rgba(40,60,100,.55)"></div>
<div class="abs" style="left:73px;top:234px;width:88.7px;height:77.6px;background:#fff;box-shadow:0.5px 0.7px 0.8px rgba(40,60,100,.55)"></div>
<div class="abs" style="left:65px;top:316.2px;width:98.6px;height:81.60000000000001px;background:linear-gradient(#fce4ac,#f8c766);border:0.6px solid #e0a030;border-radius:1.5px"></div>
<div class="abs" style="left:73px;top:318.8px;width:88.7px;height:77.2px;background:#fff;box-shadow:0.5px 0.7px 0.8px rgba(40,60,100,.55)"></div>
<div class="abs" style="left:73px;top:402.8px;width:88.7px;height:78px;background:#fff;box-shadow:0.5px 0.7px 0.8px rgba(40,60,100,.55)"></div>
<div class="t" style="left:65.6px;top:151.43px;font-size:4.6px;color:#fff;transform:scaleX(0.900);font-weight:bold">13</div>
<div class="t" style="left:65.6px;top:235.43px;font-size:4.6px;color:#fff;transform:scaleX(0.900);font-weight:bold">14</div>
<div class="t" style="left:65.6px;top:320.33px;font-size:4.6px;color:#fffbe8;transform:scaleX(0.900);font-weight:bold">15</div>
<div class="t" style="left:65.6px;top:404.63px;font-size:4.6px;color:#fff;transform:scaleX(0.900);font-weight:bold">16</div>
<div class="t" style="left:84px;top:154.13px;font-size:2.6px;color:#333;transform:scaleX(0.785);">Прочитайте на странице заданий. Вставьте на [цитируй:]. Какое из условий</div>
<div class="t" style="left:74.2px;top:157.63px;font-size:2.6px;color:#333;transform:scaleX(0.832);">Бенона иллюстрирует этот символ?</div>
<div class="t" style="left:85.7px;top:165.03px;font-size:2.6px;color:#333;transform:scaleX(0.738);">A.&nbsp;&nbsp;&nbsp;Мы должны поступать с другими чтобы жить счастливо</div>
<div class="t" style="left:85.7px;top:169.63px;font-size:2.6px;color:#333;transform:scaleX(0.752);">B.&nbsp;&nbsp;&nbsp;Мы должны заботиться о своей внешности</div>
<div class="t" style="left:85.7px;top:174.03px;font-size:2.6px;color:#333;transform:scaleX(0.776);">C.&nbsp;&nbsp;&nbsp;Мы не должны позволять нашим желаниям</div>
<div class="t" style="left:85.7px;top:178.63px;font-size:2.6px;color:#333;transform:scaleX(0.750);">контролировать нас</div>
<div class="t" style="left:85.7px;top:183.83px;font-size:2.6px;color:#333;transform:scaleX(0.755);">D.&nbsp;&nbsp;&nbsp;Мы не должны пытаться изменить прошлое</div>
<div class="t" style="left:84px;top:193.23px;font-size:2.6px;color:#222;transform:scaleX(0.751);font-weight:bold">Правильный ответ: C</div>
<div class="t" style="left:98.4px;top:241.48px;font-size:5.6px;color:#222;transform:scaleX(0.913);">Опыт 2022 года</div>
<div class="abs" style="left:79.2px;top:254.90000000000003px;width:1px;height:1px;background:#222;border-radius:50%"></div>
<div class="t" style="left:82.1px;top:254.39px;font-size:3.8px;color:#222;transform:scaleX(0.981);">Развитие навыков мониторинга</div>
<div class="t" style="left:82.1px;top:259.59px;font-size:3.8px;color:#222;transform:scaleX(0.952);">деятельности учителей (для завучей)</div>
<div class="abs" style="left:79.2px;top:267.0px;width:1px;height:1px;background:#222;border-radius:50%"></div>
<div class="t" style="left:82.1px;top:266.49px;font-size:3.8px;color:#222;transform:scaleX(1.012);">Формирование навыков развития ФГ</div>
<div class="t" style="left:82.1px;top:271.99px;font-size:3.8px;color:#222;transform:scaleX(0.940);">учащихся и оценка собственной</div>
<div class="t" style="left:82.1px;top:277.39px;font-size:3.8px;color:#222;transform:scaleX(0.948);">профессиональной деятельности</div>
<div class="t" style="left:93.57048px;top:325.78px;font-size:5.7px;color:#222;transform:scaleX(0.855);">Кейсы для педагогов</div>
<div class="abs" style="left:78.63801px;top:335.714925px;width:0.9px;height:0.9px;background:#222;border-radius:50%"></div>
<div class="t" style="left:81.61035px;top:335.14px;font-size:3.5px;color:#222;transform:scaleX(0.935);">Анализ и оценка качества <b>кейсов для</b></div>
<div class="t" style="left:81.61035px;top:339.21px;font-size:3.5px;color:#222;transform:scaleX(0.970);">формирования и развития функциональной</div>
<div class="t" style="left:81.61035px;top:343.33px;font-size:3.5px;color:#222;transform:scaleX(0.933);">грамотности (ФГ) <b>учащихся</b>.</div>
<div class="abs" style="left:78.63801px;top:348.97305px;width:0.9px;height:0.9px;background:#222;border-radius:50%"></div>
<div class="t" style="left:81.61035px;top:348.40px;font-size:3.5px;color:#222;transform:scaleX(0.977);">Навык мониторинга&nbsp; (наблюдение, оценка)</div>
<div class="t" style="left:81.61035px;top:352.64px;font-size:3.5px;color:#222;transform:scaleX(0.954);">процесса и результатов формирования и</div>
<div class="t" style="left:81.61035px;top:356.88px;font-size:3.5px;color:#222;transform:scaleX(0.950);">развития навыков ФГ.</div>
<div class="abs" style="left:78.63801px;top:362.5258px;width:0.9px;height:0.9px;background:#222;border-radius:50%"></div>
<div class="t" style="left:81.61035px;top:361.95px;font-size:3.5px;color:#222;transform:scaleX(0.955);">Кейсы для развития ФГ педагогов: ситуации</div>
<div class="t" style="left:81.61035px;top:366.08px;font-size:3.5px;color:#222;transform:scaleX(0.971);">педагогической деятельности: коммуникация с</div>
<div class="t" style="left:81.61035px;top:370.32px;font-size:3.5px;color:#222;transform:scaleX(0.967);">учащимися, понимание научных текстов,</div>
<div class="t" style="left:81.61035px;top:374.40px;font-size:3.5px;color:#222;transform:scaleX(0.958);">методические тексты (н-р, работа с таблицей</div>
<div class="t" style="left:81.61035px;top:378.50px;font-size:3.5px;color:#222;transform:scaleX(0.975);">уровней), эмоциональное взаимодействие,</div>
<div class="t" style="left:81.61035px;top:383.38px;font-size:3.5px;color:#222;transform:scaleX(0.965);">аксиологические (ценности) и др.</div>
<div class="t" style="left:93.3px;top:407.06px;font-size:5.2px;color:#222;transform:scaleX(0.857);">Помимо диагностики и</div>
<div class="t" style="left:91.5px;top:413.66px;font-size:5.2px;color:#222;transform:scaleX(0.864);">формирования навыков</div>
<div class="abs" style="left:79.2px;top:424.0px;width:1px;height:1px;background:#222;border-radius:50%"></div>
<div class="t" style="left:82.1px;top:423.53px;font-size:3.7px;color:#222;transform:scaleX(0.995);">Мотивация (поддержка энтузиазма)</div>
<div class="abs" style="left:79.2px;top:430.6px;width:1px;height:1px;background:#222;border-radius:50%"></div>
<div class="t" style="left:82.1px;top:430.13px;font-size:3.7px;color:#222;transform:scaleX(0.943);">Обратная связь</div>
<div class="abs" style="left:79.2px;top:437.3px;width:1px;height:1px;background:#222;border-radius:50%"></div>
<div class="t" style="left:82.1px;top:436.83px;font-size:3.7px;color:#222;transform:scaleX(1.031);">Поддержка</div>
<div class="abs" style="left:175.5px;top:155px;width:4.6px;height:328.5px;background:#f2f6fb;border:0.4px solid #b8c8e0"></div>
<svg class="abs" style="left:175.5px;top:155px" width="4.6" height="328" viewBox="0 0 4.6 328"><rect x="1.6" y="5.0" width="1.4" height="2.6" fill="#7f8da8"/><rect x="1.6" y="12.4" width="1.4" height="0.8" fill="#7f8da8"/><rect x="1.6" y="19.8" width="1.4" height="2.6" fill="#7f8da8"/><rect x="1.6" y="27.2" width="1.4" height="0.8" fill="#7f8da8"/><rect x="1.6" y="34.6" width="1.4" height="2.6" fill="#7f8da8"/><rect x="1.6" y="42.0" width="1.4" height="0.8" fill="#7f8da8"/><rect x="1.6" y="49.4" width="1.4" height="2.6" fill="#7f8da8"/><rect x="1.6" y="56.8" width="1.4" height="0.8" fill="#7f8da8"/><rect x="1.6" y="64.2" width="1.4" height="2.6" fill="#7f8da8"/><rect x="1.6" y="71.6" width="1.4" height="0.8" fill="#7f8da8"/><rect x="1.6" y="79.0" width="1.4" height="2.6" fill="#7f8da8"/><rect x="1.6" y="86.4" width="1.4" height="0.8" fill="#7f8da8"/><rect x="1.6" y="93.8" width="1.4" height="2.6" fill="#7f8da8"/><rect x="1.6" y="101.2" width="1.4" height="0.8" fill="#7f8da8"/><rect x="1.6" y="108.6" width="1.4" height="2.6" fill="#7f8da8"/><rect x="1.6" y="116.0" width="1.4" height="0.8" fill="#7f8da8"/><rect x="1.6" y="123.4" width="1.4" height="2.6" fill="#7f8da8"/><rect x="1.6" y="130.8" width="1.4" height="0.8" fill="#7f8da8"/><rect x="1.6" y="138.2" width="1.4" height="2.6" fill="#7f8da8"/><rect x="1.6" y="145.6" width="1.4" height="0.8" fill="#7f8da8"/><rect x="1.6" y="153.0" width="1.4" height="2.6" fill="#7f8da8"/><rect x="1.6" y="160.4" width="1.4" height="0.8" fill="#7f8da8"/><rect x="1.6" y="167.8" width="1.4" height="2.6" fill="#7f8da8"/><rect x="1.6" y="175.2" width="1.4" height="0.8" fill="#7f8da8"/><rect x="1.6" y="182.6" width="1.4" height="2.6" fill="#7f8da8"/><rect x="1.6" y="190.0" width="1.4" height="0.8" fill="#7f8da8"/><rect x="1.6" y="197.4" width="1.4" height="2.6" fill="#7f8da8"/><rect x="1.6" y="204.8" width="1.4" height="0.8" fill="#7f8da8"/><rect x="1.6" y="212.2" width="1.4" height="2.6" fill="#7f8da8"/><rect x="1.6" y="219.6" width="1.4" height="0.8" fill="#7f8da8"/><rect x="1.6" y="227.0" width="1.4" height="2.6" fill="#7f8da8"/><rect x="1.6" y="234.4" width="1.4" height="0.8" fill="#7f8da8"/><rect x="1.6" y="241.8" width="1.4" height="2.6" fill="#7f8da8"/><rect x="1.6" y="249.2" width="1.4" height="0.8" fill="#7f8da8"/><rect x="1.6" y="256.6" width="1.4" height="2.6" fill="#7f8da8"/><rect x="1.6" y="264.0" width="1.4" height="0.8" fill="#7f8da8"/><rect x="1.6" y="271.4" width="1.4" height="2.6" fill="#7f8da8"/><rect x="1.6" y="278.8" width="1.4" height="0.8" fill="#7f8da8"/><rect x="1.6" y="286.2" width="1.4" height="2.6" fill="#7f8da8"/><rect x="1.6" y="293.6" width="1.4" height="0.8" fill="#7f8da8"/><rect x="1.6" y="301.0" width="1.4" height="2.6" fill="#7f8da8"/><rect x="1.6" y="308.4" width="1.4" height="0.8" fill="#7f8da8"/><rect x="1.6" y="315.8" width="1.4" height="2.6" fill="#7f8da8"/><rect x="1.6" y="323.2" width="1.4" height="0.8" fill="#7f8da8"/></svg>
<div class="abs" style="left:285.8px;top:138.2px;width:377.4px;height:6.6px;background:#f4f7fc;border:0.4px solid #b8c8e0"></div>
<div class="t" style="left:293.879845875px;top:140.23px;font-size:4.6px;color:#3a445e;transform:scaleX(0.860);">12</div>
<div class="abs" style="left:303.10999999999996px;top:141.2px;width:0.7px;height:1.3px;background:#6f7d98;"></div>
<div class="abs" style="left:299.46999999999997px;top:141.5px;width:0.6px;height:0.7px;background:#8d99b2;"></div>
<div class="abs" style="left:306.84999999999997px;top:141.5px;width:0.6px;height:0.7px;background:#8d99b2;"></div>
<div class="t" style="left:308.78665056250003px;top:140.23px;font-size:4.6px;color:#3a445e;transform:scaleX(0.860);">11</div>
<div class="abs" style="left:317.87px;top:141.2px;width:0.7px;height:1.3px;background:#6f7d98;"></div>
<div class="abs" style="left:314.23px;top:141.5px;width:0.6px;height:0.7px;background:#8d99b2;"></div>
<div class="abs" style="left:321.61px;top:141.5px;width:0.6px;height:0.7px;background:#8d99b2;"></div>
<div class="t" style="left:323.39984587500004px;top:140.23px;font-size:4.6px;color:#3a445e;transform:scaleX(0.860);">10</div>
<div class="abs" style="left:332.63px;top:141.2px;width:0.7px;height:1.3px;background:#6f7d98;"></div>
<div class="abs" style="left:328.99px;top:141.5px;width:0.6px;height:0.7px;background:#8d99b2;"></div>
<div class="abs" style="left:336.37px;top:141.5px;width:0.6px;height:0.7px;background:#8d99b2;"></div>
<div class="t" style="left:339.2599229375px;top:140.23px;font-size:4.6px;color:#3a445e;transform:scaleX(0.860);">9</div>
<div class="abs" style="left:347.39px;top:141.2px;width:0.7px;height:1.3px;background:#6f7d98;"></div>
<div class="abs" style="left:343.75px;top:141.5px;width:0.6px;height:0.7px;background:#8d99b2;"></div>
<div class="abs" style="left:351.13px;top:141.5px;width:0.6px;height:0.7px;background:#8d99b2;"></div>
<div class="t" style="left:354.0199229375px;top:140.23px;font-size:4.6px;color:#3a445e;transform:scaleX(0.860);">8</div>
<div class="abs" style="left:362.15px;top:141.2px;width:0.7px;height:1.3px;background:#6f7d98;"></div>
<div class="abs" style="left:358.51px;top:141.5px;width:0.6px;height:0.7px;background:#8d99b2;"></div>
<div class="abs" style="left:365.89px;top:141.5px;width:0.6px;height:0.7px;background:#8d99b2;"></div>
<div class="t" style="left:368.7799229375px;top:140.23px;font-size:4.6px;color:#3a445e;transform:scaleX(0.860);">7</div>
<div class="abs" style="left:376.90999999999997px;top:141.2px;width:0.7px;height:1.3px;background:#6f7d98;"></div>
<div class="abs" style="left:373.27px;top:141.5px;width:0.6px;height:0.7px;background:#8d99b2;"></div>
<div class="abs" style="left:380.65px;top:141.5px;width:0.6px;height:0.7px;background:#8d99b2;"></div>
<div class="t" style="left:383.53992293749997px;top:140.23px;font-size:4.6px;color:#3a445e;transform:scaleX(0.860);">6</div>
<div class="abs" style="left:391.66999999999996px;top:141.2px;width:0.7px;height:1.3px;background:#6f7d98;"></div>
<div class="abs" style="left:388.03px;top:141.5px;width:0.6px;height:0.7px;background:#8d99b2;"></div>
<div class="abs" style="left:395.40999999999997px;top:141.5px;width:0.6px;height:0.7px;background:#8d99b2;"></div>
<div class="t" style="left:398.29992293749996px;top:140.23px;font-size:4.6px;color:#3a445e;transform:scaleX(0.860);">5</div>
<div class="abs" style="left:406.42999999999995px;top:141.2px;width:0.7px;height:1.3px;background:#6f7d98;"></div>
<div class="abs" style="left:402.78999999999996px;top:141.5px;width:0.6px;height:0.7px;background:#8d99b2;"></div>
<div class="abs" style="left:410.16999999999996px;top:141.5px;width:0.6px;height:0.7px;background:#8d99b2;"></div>
<div class="t" style="left:413.05992293749995px;top:140.23px;font-size:4.6px;color:#3a445e;transform:scaleX(0.860);">4</div>
<div class="abs" style="left:421.18999999999994px;top:141.2px;width:0.7px;height:1.3px;background:#6f7d98;"></div>
<div class="abs" style="left:417.54999999999995px;top:141.5px;width:0.6px;height:0.7px;background:#8d99b2;"></div>
<div class="abs" style="left:424.92999999999995px;top:141.5px;width:0.6px;height:0.7px;background:#8d99b2;"></div>
<div class="t" style="left:427.81992293749994px;top:140.23px;font-size:4.6px;color:#3a445e;transform:scaleX(0.860);">3</div>
<div class="abs" style="left:435.94999999999993px;top:141.2px;width:0.7px;height:1.3px;background:#6f7d98;"></div>
<div class="abs" style="left:432.30999999999995px;top:141.5px;width:0.6px;height:0.7px;background:#8d99b2;"></div>
<div class="abs" style="left:439.68999999999994px;top:141.5px;width:0.6px;height:0.7px;background:#8d99b2;"></div>
<div class="t" style="left:442.5799229375px;top:140.23px;font-size:4.6px;color:#3a445e;transform:scaleX(0.860);">2</div>
<div class="abs" style="left:450.71px;top:141.2px;width:0.7px;height:1.3px;background:#6f7d98;"></div>
<div class="abs" style="left:447.07px;top:141.5px;width:0.6px;height:0.7px;background:#8d99b2;"></div>
<div class="abs" style="left:454.45px;top:141.5px;width:0.6px;height:0.7px;background:#8d99b2;"></div>
<div class="t" style="left:457.3399229375px;top:140.23px;font-size:4.6px;color:#3a445e;transform:scaleX(0.860);">1</div>
<div class="abs" style="left:465.46999999999997px;top:141.2px;width:0.7px;height:1.3px;background:#6f7d98;"></div>
<div class="abs" style="left:461.83px;top:141.5px;width:0.6px;height:0.7px;background:#8d99b2;"></div>
<div class="abs" style="left:469.21px;top:141.5px;width:0.6px;height:0.7px;background:#8d99b2;"></div>
<div class="t" style="left:472.09992293749997px;top:140.23px;font-size:4.6px;color:#3a445e;transform:scaleX(0.860);">0</div>
<div class="abs" style="left:480.22999999999996px;top:141.2px;width:0.7px;height:1.3px;background:#6f7d98;"></div>
<div class="abs" style="left:476.59px;top:141.5px;width:0.6px;height:0.7px;background:#8d99b2;"></div>
<div class="abs" style="left:483.96999999999997px;top:141.5px;width:0.6px;height:0.7px;background:#8d99b2;"></div>
<div class="t" style="left:486.85992293749996px;top:140.23px;font-size:4.6px;color:#3a445e;transform:scaleX(0.860);">1</div>
<div class="abs" style="left:494.98999999999995px;top:141.2px;width:0.7px;height:1.3px;background:#6f7d98;"></div>
<div class="abs" style="left:491.34999999999997px;top:141.5px;width:0.6px;height:0.7px;background:#8d99b2;"></div>
<div class="abs" style="left:498.72999999999996px;top:141.5px;width:0.6px;height:0.7px;background:#8d99b2;"></div>
<div class="t" style="left:501.61992293749995px;top:140.23px;font-size:4.6px;color:#3a445e;transform:scaleX(0.860);">2</div>
<div class="abs" style="left:509.74999999999994px;top:141.2px;width:0.7px;height:1.3px;background:#6f7d98;"></div>
<div class="abs" style="left:506.10999999999996px;top:141.5px;width:0.6px;height:0.7px;background:#8d99b2;"></div>
<div class="abs" style="left:513.49px;top:141.5px;width:0.6px;height:0.7px;background:#8d99b2;"></div>
<div class="t" style="left:516.3799229375px;top:140.23px;font-size:4.6px;color:#3a445e;transform:scaleX(0.860);">3</div>
<div class="abs" style="left:524.51px;top:141.2px;width:0.7px;height:1.3px;background:#6f7d98;"></div>
<div class="abs" style="left:520.8700000000001px;top:141.5px;width:0.6px;height:0.7px;background:#8d99b2;"></div>
<div class="abs" style="left:528.2500000000001px;top:141.5px;width:0.6px;height:0.7px;background:#8d99b2;"></div>
<div class="t" style="left:531.1399229375px;top:140.23px;font-size:4.6px;color:#3a445e;transform:scaleX(0.860);">4</div>
<div class="abs" style="left:539.27px;top:141.2px;width:0.7px;height:1.3px;background:#6f7d98;"></div>
<div class="abs" style="left:535.6300000000001px;top:141.5px;width:0.6px;height:0.7px;background:#8d99b2;"></div>
<div class="abs" style="left:543.0100000000001px;top:141.5px;width:0.6px;height:0.7px;background:#8d99b2;"></div>
<div class="t" style="left:545.8999229375px;top:140.23px;font-size:4.6px;color:#3a445e;transform:scaleX(0.860);">5</div>
<div class="abs" style="left:554.03px;top:141.2px;width:0.7px;height:1.3px;background:#6f7d98;"></div>
<div class="abs" style="left:550.3900000000001px;top:141.5px;width:0.6px;height:0.7px;background:#8d99b2;"></div>
<div class="abs" style="left:557.7700000000001px;top:141.5px;width:0.6px;height:0.7px;background:#8d99b2;"></div>
<div class="t" style="left:560.6599229375px;top:140.23px;font-size:4.6px;color:#3a445e;transform:scaleX(0.860);">6</div>
<div class="abs" style="left:568.79px;top:141.2px;width:0.7px;height:1.3px;background:#6f7d98;"></div>
<div class="abs" style="left:565.1500000000001px;top:141.5px;width:0.6px;height:0.7px;background:#8d99b2;"></div>
<div class="abs" style="left:572.5300000000001px;top:141.5px;width:0.6px;height:0.7px;background:#8d99b2;"></div>
<div class="t" style="left:575.4199229375px;top:140.23px;font-size:4.6px;color:#3a445e;transform:scaleX(0.860);">7</div>
<div class="abs" style="left:583.55px;top:141.2px;width:0.7px;height:1.3px;background:#6f7d98;"></div>
<div class="abs" style="left:579.9100000000001px;top:141.5px;width:0.6px;height:0.7px;background:#8d99b2;"></div>
<div class="abs" style="left:587.2900000000001px;top:141.5px;width:0.6px;height:0.7px;background:#8d99b2;"></div>
<div class="t" style="left:590.1799229375px;top:140.23px;font-size:4.6px;color:#3a445e;transform:scaleX(0.860);">8</div>
<div class="abs" style="left:598.31px;top:141.2px;width:0.7px;height:1.3px;background:#6f7d98;"></div>
<div class="abs" style="left:594.6700000000001px;top:141.5px;width:0.6px;height:0.7px;background:#8d99b2;"></div>
<div class="abs" style="left:602.0500000000001px;top:141.5px;width:0.6px;height:0.7px;background:#8d99b2;"></div>
<div class="t" style="left:604.9399229375px;top:140.23px;font-size:4.6px;color:#3a445e;transform:scaleX(0.860);">9</div>
<div class="abs" style="left:613.0699999999999px;top:141.2px;width:0.7px;height:1.3px;background:#6f7d98;"></div>
<div class="abs" style="left:609.4300000000001px;top:141.5px;width:0.6px;height:0.7px;background:#8d99b2;"></div>
<div class="abs" style="left:616.8100000000001px;top:141.5px;width:0.6px;height:0.7px;background:#8d99b2;"></div>
<div class="t" style="left:618.5998458749999px;top:140.23px;font-size:4.6px;color:#3a445e;transform:scaleX(0.860);">10</div>
<div class="abs" style="left:627.8299999999999px;top:141.2px;width:0.7px;height:1.3px;background:#6f7d98;"></div>
<div class="abs" style="left:624.19px;top:141.5px;width:0.6px;height:0.7px;background:#8d99b2;"></div>
<div class="abs" style="left:631.57px;top:141.5px;width:0.6px;height:0.7px;background:#8d99b2;"></div>
<div class="t" style="left:633.5066505625px;top:140.23px;font-size:4.6px;color:#3a445e;transform:scaleX(0.860);">11</div>
<div class="abs" style="left:642.5899999999999px;top:141.2px;width:0.7px;height:1.3px;background:#6f7d98;"></div>
<div class="abs" style="left:638.95px;top:141.5px;width:0.6px;height:0.7px;background:#8d99b2;"></div>
<div class="abs" style="left:646.33px;top:141.5px;width:0.6px;height:0.7px;background:#8d99b2;"></div>
<div class="t" style="left:648.1198458749999px;top:140.23px;font-size:4.6px;color:#3a445e;transform:scaleX(0.860);">12</div>
<div class="abs" style="left:286.5px;top:155.5px;width:376px;height:327.5px;background:#fff;box-shadow:1.6px 1.6px 1.2px rgba(45,70,120,.75)"></div>
<div class="abs" style="left:765.8px;top:148.5px;width:5.4px;height:339.5px;background:linear-gradient(#8fade0,#6a90c8);"></div>
<div class="abs" style="left:765.8px;top:148.5px;width:0.6px;height:339.5px;background:rgba(70,100,160,.5);"></div>
<div class="abs" style="left:766.3px;top:416.8px;width:4.6px;height:16.8px;background:#e6eefa;border:0.5px solid #8ea6cc;border-radius:1px"></div>
<svg class="abs" style="left:766.6px;top:150.4px" width="4" height="3" viewBox="0 0 8 6"><path d="M0 6H8L4 0Z" fill="#3b5488"/></svg>
<svg class="abs" style="left:766.6px;top:463.6px" width="4" height="3" viewBox="0 0 8 6"><path d="M0 0H8L4 6Z" fill="#3b5488"/></svg>
<svg class="abs" style="left:766.4px;top:470px" width="4.4" height="12" viewBox="0 0 9 24"><path d="M0 5H9L4.5 0Z M0 10H9L4.5 5Z M0 14H9L4.5 19Z M0 19H9L4.5 24Z" fill="#27385f"/></svg>
<div class="abs" style="left:63.7px;top:487px;width:707.5px;height:1.2px;background:#3b5f98;"></div>
<svg class="abs" style="left:272px;top:360.5px" width="5" height="8" viewBox="0 0 10 16"><path d="M1 1 V13 L4 10.2 L6.2 15 L8 14.2 L5.8 9.6 H9.4Z" fill="#fff" stroke="#111" stroke-width="1.1"/></svg>
<svg class="abs" id="slidetext" style="left:286.5px;top:155.5px" width="376" height="327.5" viewBox="286.5 155.5 376 327.5" font-family="Liberation Sans, sans-serif" fill="#141414" stroke="#141414" stroke-width=".18">
<text x="372.6" y="204.5" font-size="24" textLength="202.20" lengthAdjust="spacingAndGlyphs">Кейсы для педагогов</text>
<text x="323" y="235.75" font-size="16" textLength="171.60" lengthAdjust="spacingAndGlyphs">Анализ и оценка качества</text>
<text x="498" y="235.75" font-size="16" textLength="74.50" lengthAdjust="spacingAndGlyphs" font-weight="bold">кейсов для</text>
<text x="323" y="253" font-size="16" textLength="295.00" lengthAdjust="spacingAndGlyphs">формирования и развития функциональной</text>
<text x="323" y="270.5" font-size="16" textLength="114.60" lengthAdjust="spacingAndGlyphs">грамотности (ФГ)</text>
<text x="441.2" y="270.5" font-size="16" textLength="63.80" lengthAdjust="spacingAndGlyphs" font-weight="bold">учащихся</text>
<text x="505.4" y="270.5" font-size="16" textLength="3.20" lengthAdjust="spacingAndGlyphs">.</text>
<text x="323" y="292" font-size="16" textLength="134.00" lengthAdjust="spacingAndGlyphs">Навык мониторинга</text>
<text x="464.5" y="292" font-size="16" textLength="147.50" lengthAdjust="spacingAndGlyphs">(наблюдение, оценка)</text>
<text x="323" y="310" font-size="16" textLength="270.75" lengthAdjust="spacingAndGlyphs">процесса и результатов формирования и</text>
<text x="323" y="328" font-size="16" textLength="142.50" lengthAdjust="spacingAndGlyphs">развития навыков ФГ.</text>
<text x="323" y="349.5" font-size="16" textLength="292.00" lengthAdjust="spacingAndGlyphs">Кейсы для развития ФГ педагогов: ситуации</text>
<text x="323" y="367" font-size="16" textLength="315.00" lengthAdjust="spacingAndGlyphs">педагогической деятельности: коммуникация с</text>
<text x="323" y="385" font-size="16" textLength="274.50" lengthAdjust="spacingAndGlyphs">учащимися, понимание научных текстов,</text>
<text x="323" y="402.3" font-size="16" textLength="300.00" lengthAdjust="spacingAndGlyphs">методические тексты (н-р, работа с таблицей</text>
<text x="323" y="419.7" font-size="16" textLength="292.00" lengthAdjust="spacingAndGlyphs">уровней), эмоциональное взаимодействие,</text>
<text x="323" y="436.6" font-size="16" textLength="223.00" lengthAdjust="spacingAndGlyphs">аксиологические (ценности) и др.</text>
<circle cx="311.2" cy="230.6" r="2.1"/>
<circle cx="311.2" cy="286.8" r="2.1"/>
<circle cx="311.2" cy="344.3" r="2.1"/>
<path d="M323 438.6 H437" stroke="#e06a6a" stroke-width=".7" fill="none"/>
<path d="M473.5 404.3 H494.5" stroke="#e06a6a" stroke-width=".7" fill="none"/>
</svg>
<!-- SECTION:TOOLBAR -->
<div class="abs" style="left:0px;top:488.2px;width:833px;height:32px;background:#1b1b1b;"></div>
<svg class="abs" style="left:23px;top:490.5px" width="14" height="16" viewBox="0 0 28 32"><rect x="10" y="3" width="8" height="15" rx="4" fill="#a6a6a6"/><path d="M6 15C6 25 22 25 22 15M14 23V28M9.5 28H18.5" stroke="#a6a6a6" stroke-width="2" fill="none"/><path d="M23 3L5 29" stroke="#e8443a" stroke-width="2.2"/></svg>
<svg class="abs" style="left:46px;top:495.2px" width="6" height="4" viewBox="0 0 12 8"><path d="M1.5 6.5L6 2L10.5 6.5" stroke="#cfcfcf" stroke-width="1.7" fill="none"/></svg>
<div class="t" style="left:6.5px;top:510.12px;font-size:8.4px;color:#dcdcdc;transform:scaleX(0.818);">Включить звук</div>
<svg class="abs" style="left:80.5px;top:491.5px" width="17" height="14" viewBox="0 0 34 28"><rect x="3" y="6" width="19" height="16" rx="3.5" fill="#ababab"/><path d="M23.5 12L31 7.5V20.5L23.5 16Z" fill="#ababab"/><path d="M28 2L5 27" stroke="#e8443a" stroke-width="2.2"/></svg>
<svg class="abs" style="left:110px;top:495.2px" width="6" height="4" viewBox="0 0 12 8"><path d="M1.5 6.5L6 2L10.5 6.5" stroke="#cfcfcf" stroke-width="1.7" fill="none"/></svg>
<div class="t" style="left:67.5px;top:510.12px;font-size:8.4px;color:#dcdcdc;transform:scaleX(0.787);">Начать видео</div>
<svg class="abs" style="left:279px;top:493px" width="14" height="11" viewBox="0 0 28 22"><circle cx="9.5" cy="6.5" r="4.6" fill="#e6e6e6"/><path d="M1 21C1 13 18 13 18 21Z" fill="#e6e6e6"/><circle cx="20.5" cy="7.5" r="3.6" fill="#e6e6e6"/><path d="M19.5 13.2C24 12.6 27.5 15.5 27.5 21H20.5C20.5 17.5 20.3 15.2 19.5 13.2Z" fill="#e6e6e6"/></svg>
<div class="t" style="left:296px;top:494.25px;font-size:7px;color:#e6e6e6;transform:scaleX(0.771);">15</div>
<svg class="abs" style="left:312px;top:495.2px" width="6" height="4" viewBox="0 0 12 8"><path d="M1.5 6.5L6 2L10.5 6.5" stroke="#cfcfcf" stroke-width="1.7" fill="none"/></svg>
<div class="t" style="left:270px;top:510.12px;font-size:8.4px;color:#dcdcdc;transform:scaleX(0.832);">Участники</div>
<svg class="abs" style="left:338.4px;top:492.4px" width="14" height="13" viewBox="0 0 28 26"><path d="M3 3H25C26.5 3 27 4 27 5V17C27 18.5 26 19 25 19H14L7 25V19H3C1.5 19 1 18 1 17V5C1 3.6 2 3 3 3Z" fill="#b4b4b4"/></svg>
<svg class="abs" style="left:348.6px;top:490px" width="8" height="8" viewBox="0 0 16 16"><circle cx="8" cy="8" r="7.6" fill="#e8342c"/><text x="8" y="12" font-size="11" font-weight="bold" text-anchor="middle" fill="#fff" font-family="Liberation Sans, sans-serif">1</text></svg>
<svg class="abs" style="left:361px;top:495.2px" width="6" height="4" viewBox="0 0 12 8"><path d="M1.5 6.5L6 2L10.5 6.5" stroke="#cfcfcf" stroke-width="1.7" fill="none"/></svg>
<div class="t" style="left:340.6px;top:510.12px;font-size:8.4px;color:#dcdcdc;transform:scaleX(0.797);">Чат</div>
<svg class="abs" style="left:402.8px;top:492.8px" width="13.4" height="12" viewBox="0 0 27 24"><rect x="0" y="0" width="27" height="24" rx="5.5" fill="#23d959"/><path d="M13.5 18V7M8.5 11.5L13.5 6L18.5 11.5" stroke="#123b1e" stroke-width="2.6" fill="none"/></svg>
<div class="t" style="left:375.2px;top:510.12px;font-size:8.4px;color:#23d959;transform:scaleX(0.798);">Демонстрация экрана</div>
<svg class="abs" style="left:463px;top:492.2px" width="13" height="13" viewBox="0 0 26 26"><circle cx="13" cy="13" r="11.2" fill="none" stroke="#e2e2e2" stroke-width="2"/><circle cx="13" cy="13" r="8" fill="#9a9a9a"/></svg>
<div class="t" style="left:458.4px;top:510.12px;font-size:8.4px;color:#dcdcdc;transform:scaleX(0.784);">Запись</div>
<svg class="abs" style="left:507px;top:490.6px" width="14" height="14" viewBox="0 0 28 28"><circle cx="12.5" cy="16" r="9.5" fill="#e6e6e6"/><circle cx="9" cy="14" r="1.5" fill="#1b1b1b"/><circle cx="16" cy="14" r="1.5" fill="#1b1b1b"/><path d="M7.5 18.5C10 22.5 15 22.5 17.5 18.5Z" fill="#1b1b1b"/><path d="M23 1.5V8.5M19.5 5H26.5" stroke="#e6e6e6" stroke-width="2"/></svg>
<div class="t" style="left:500px;top:510.12px;font-size:8.4px;color:#dcdcdc;transform:scaleX(0.789);">Реакции</div>
<svg class="abs" style="left:552.6px;top:492.4px" width="12" height="12" viewBox="0 0 24 24"><path d="M9 2H6C3.5 2 2 3.5 2 6V9M15 2H18C20.5 2 22 3.5 22 6V9M22 15V18C22 20.5 20.5 22 18 22H15M9 22H6C3.5 22 2 20.5 2 18V15" stroke="#e0e0e0" stroke-width="2" fill="none"/><circle cx="17" cy="7" r="2.6" fill="none" stroke="#e0e0e0" stroke-width="1.6"/><circle cx="7.5" cy="16.5" r="2.6" fill="none" stroke="#e0e0e0" stroke-width="1.6"/></svg>
<div class="t" style="left:538.8px;top:510.12px;font-size:8.4px;color:#dcdcdc;transform:scaleX(0.822);">Приложения</div>
<svg class="abs" style="left:609.4px;top:492.2px" width="13" height="12" viewBox="0 0 26 24"><rect x="2" y="2" width="21" height="16" rx="3" fill="none" stroke="#e0e0e0" stroke-width="2.2"/><rect x="11" y="15.5" width="13" height="6" rx="3" fill="#e6e6e6" stroke="#1b1b1b" stroke-width="1.4"/></svg>
<div class="t" style="left:587.3px;top:510.12px;font-size:8.4px;color:#dcdcdc;transform:scaleX(0.818);">Доски сообщений</div>
<div class="abs" style="left:794px;top:495.5px;width:33.5px;height:17px;background:#c6272e;border-radius:4px;color:#fff;font-weight:bold;font-size:7.6px;text-align:center;line-height:16.6px"><span style="display:inline-block;transform:scaleX(.88)">Выйти</span></div>
<div class="abs" style="left:0px;top:519.7px;width:833px;height:5.3px;background:linear-gradient(90deg,#dba650 0%,#d9a14a 45%,#c98c34 50%,#d6a24a 54%,#edd8a2 58%,#f2e2b2 75%,#ecca7a 84%,#e4b044 90%,#e6b44a 100%);"></div>
<div class="abs" style="left:0px;top:519.7px;width:833px;height:0.8px;background:#2a2418;opacity:.55"></div>
<div class="abs" style="left:90px;top:520.3px;width:30px;height:4.7px;background:#e9d197;"></div>
<div class="abs" style="left:217px;top:520.3px;width:30px;height:4.7px;background:#cdd3da;"></div>
<div class="abs" style="left:15px;top:521.6px;width:5px;height:6px;background:#e4dccb;border-radius:5px 5px 0 0"></div>
<div class="abs" style="left:35px;top:521.6px;width:11px;height:6px;background:#8b5bd8;border-radius:5px 5px 0 0"></div>
<div class="abs" style="left:67px;top:521.6px;width:10px;height:6px;background:#e23b2e;border-radius:5px 5px 0 0"></div>
<div class="abs" style="left:100px;top:521.6px;width:9px;height:6px;background:#f6f6f0;border-radius:5px 5px 0 0"></div>
<div class="abs" style="left:131px;top:521.6px;width:9px;height:6px;background:#e8332a;border-radius:5px 5px 0 0"></div>
<div class="abs" style="left:163px;top:521.6px;width:9px;height:6px;background:#e8332a;border-radius:5px 5px 0 0"></div>
<div class="abs" style="left:194px;top:521.6px;width:8px;height:6px;background:#8e98a8;border-radius:5px 5px 0 0"></div>
<div class="abs" style="left:227px;top:521.6px;width:9px;height:6px;background:#4a8fe0;border-radius:5px 5px 0 0"></div>
</div>
</body>
</html>
